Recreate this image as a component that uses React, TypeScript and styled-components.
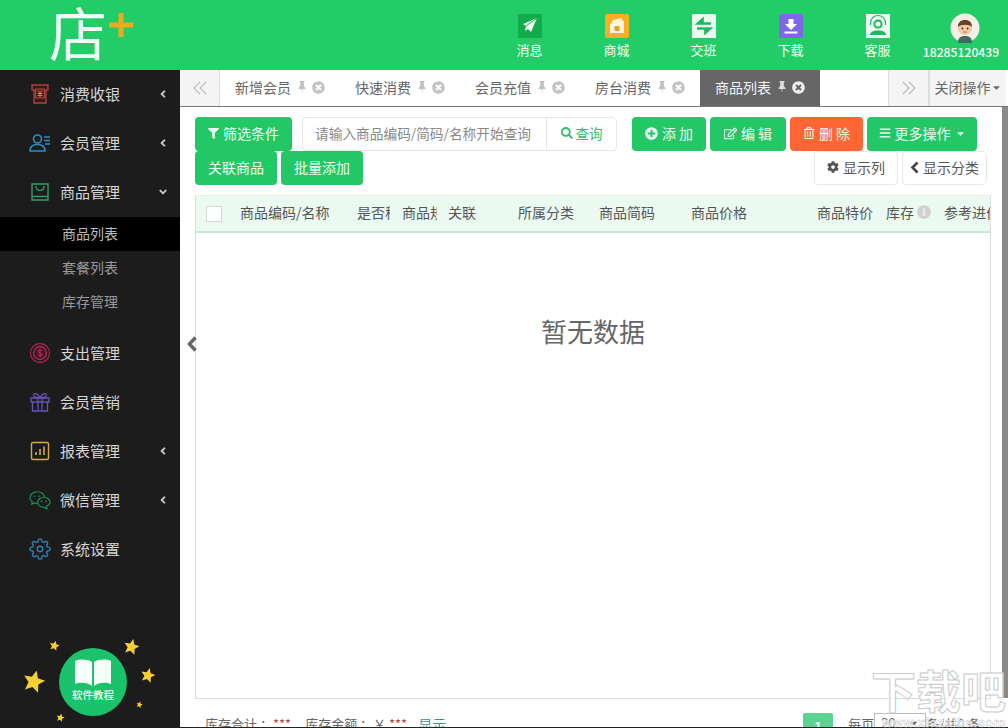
import React from "react";
import styled, { createGlobalStyle } from "styled-components";
import {
  FaFilter,
  FaSearch,
  FaPlusCircle,
  FaRegEdit,
  FaRegTrashAlt,
  FaBars,
  FaCog,
  FaTimesCircle,
  FaInfoCircle,
  FaAngleLeft,
  FaAngleDown,
  FaCaretDown,
} from "react-icons/fa";
import { FiSettings } from "react-icons/fi";

const GlobalStyle = createGlobalStyle`
  html, body {
    margin: 0;
    padding: 0;
    width: 1008px;
    height: 728px;
    overflow: hidden;
    background: #fff;
    font-family: "Noto Sans CJK SC", "Liberation Sans", sans-serif;
  }
`;

const Page = styled.div`
  position: relative;
  width: 1008px;
  height: 728px;
  display: flex;
  flex-direction: column;
  overflow: hidden;
`;

const Header = styled.header`
  flex: 0 0 70px;
  background: #22cc66;
  display: flex;
  align-items: stretch;
  padding-right: 7px;
`;

const Logo = styled.div`
  width: 180px;
  position: relative;
  flex: none;
`;

const LogoText = styled.span`
  position: absolute;
  left: 49px;
  top: -8px;
  font-size: 58px;
  line-height: 78px;
  font-weight: 400;
  color: #effff5;
`;

const LogoPlus = styled.svg`
  position: absolute;
  left: 108px;
  top: 12px;
`;

const HeaderNav = styled.nav`
  margin-left: auto;
  display: flex;
`;

const NavItem = styled.div<{ $wide?: boolean }>`
  width: ${(p) => (p.$wide ? 80 : 87)}px;
  display: flex;
  flex-direction: column;
  align-items: center;
  padding-top: 14px;
  box-sizing: border-box;
`;

const NavLabel = styled.span<{ $number?: boolean }>`
  margin-top: ${(p) => (p.$number ? 0 : 3)}px;
  font-size: ${(p) => (p.$number ? 12.2 : 13)}px;
  line-height: 18px;
  color: #f2fff7;
  white-space: nowrap;
  font-weight: ${(p) => (p.$number ? 500 : 400)};
`;

const AvatarMark = styled.svg`
  margin-left: 7px;
  margin-top: -1px;
  flex: none;
`;

const Body = styled.div`
  flex: 1;
  display: flex;
  min-height: 0;
`;

const Sidebar = styled.aside`
  flex: 0 0 180px;
  background: #1c1c1c;
  display: flex;
  flex-direction: column;
`;

const MenuItem = styled.div`
  height: 49px;
  box-sizing: border-box;
  padding-bottom: 2px;
  display: flex;
  align-items: center;
  padding-left: 29px;
  font-size: 15px;
  color: #d6d6d6;
  flex: none;
`;

const MenuIcon = styled.svg`
  flex: none;
  width: 22px;
  height: 22px;
  margin-right: 9px;
`;

const GearIcon = styled(FiSettings)`
  flex: none;
  width: 22px;
  height: 22px;
  margin-right: 9px;
  color: #2a84b8;
  stroke-width: 1.5;
`;

const MenuCaret = styled.span`
  margin-left: 37px;
  display: flex;
  font-size: 12px;
  color: #c8c8c8;
`;

const SubMenu = styled.div`
  padding-bottom: 10px;
`;

const SubItem = styled.div<{ $active?: boolean }>`
  height: 34px;
  line-height: 32px;
  padding-left: 62px;
  font-size: 14px;
  color: ${(p) => (p.$active ? "#bdbdbd" : "#9a9a9a")};
  background: ${(p) => (p.$active ? "#000" : "transparent")};
`;

const Tutorial = styled.div`
  position: relative;
  margin-top: auto;
  margin-bottom: 12px;
  margin-left: 59px;
  width: 68px;
  height: 68px;
  border-radius: 50%;
  background: #19c26b;
  display: flex;
  flex-direction: column;
  align-items: center;
  padding-top: 11px;
  box-sizing: border-box;
`;

const TutorialLabel = styled.span`
  font-size: 10.5px;
  line-height: 14px;
  color: #f3fff8;
  margin-top: 1px;
  white-space: nowrap;
  font-weight: 500;
`;

const StarMark = styled.svg<{ $x: number; $y: number; $s: number }>`
  position: absolute;
  left: ${(p) => p.$x}px;
  top: ${(p) => p.$y}px;
  width: ${(p) => p.$s}px;
  height: ${(p) => p.$s}px;
`;

const Main = styled.main`
  flex: 1;
  min-width: 0;
  position: relative;
  display: flex;
  flex-direction: column;
  overflow: hidden;
  border-bottom: 1px solid #222;
`;

const TabBar = styled.div`
  flex: 0 0 37px;
  display: flex;
  box-sizing: border-box;
  border-bottom: 1px solid #777;
  background: #fff;
`;

const TabArrow = styled.div<{ $side: "left" | "right" }>`
  width: 40px;
  flex: none;
  display: flex;
  align-items: center;
  justify-content: center;
  background: #f4f4f4;
  box-sizing: border-box;
  border-${(p) => (p.$side === "left" ? "right" : "left")}: 1px solid #dedede;
`;

const Tab = styled.div<{ $active?: boolean }>`
  width: 120px;
  flex: none;
  display: flex;
  align-items: center;
  padding-left: 15px;
  padding-bottom: 2px;
  box-sizing: border-box;
  font-size: 14px;
  background: ${(p) => (p.$active ? "#666" : "#fff")};
  color: ${(p) => (p.$active ? "#f2f2f2" : "#666")};
`;

const TabPin = styled.svg<{ $active?: boolean }>`
  flex: none;
  margin-left: 7px;
  color: ${(p) => (p.$active ? "#ddd" : "#c0c0c0")};
`;

const TabClose = styled.span<{ $active?: boolean }>`
  display: flex;
  margin-left: 6px;
  font-size: 13px;
  color: ${(p) => (p.$active ? "#eee" : "#c4c4c4")};
`;

const TabSpacer = styled.div`
  flex: 1;
`;

const CloseOps = styled.div`
  width: 78px;
  margin-right: 2px;
  flex: none;
  display: flex;
  align-items: center;
  justify-content: center;
  padding-bottom: 2px;
  background: #f4f4f4;
  border-left: 2px solid #dedede;
  box-sizing: border-box;
  font-size: 14px;
  color: #666;
  white-space: nowrap;
`;

const Content = styled.div`
  flex: 1;
  min-height: 0;
  display: flex;
  flex-direction: column;
  padding: 10px 0 0 15px;
`;

const ToolRow = styled.div`
  display: flex;
  height: 34px;
  flex: none;
`;

const Button = styled.div<{ $tone?: "green" | "orange"; $w: number; $ml?: number }>`
  width: ${(p) => p.$w}px;
  margin-left: ${(p) => p.$ml ?? 0}px;
  height: 34px;
  flex: none;
  display: flex;
  align-items: center;
  justify-content: center;
  gap: 4px;
  padding-bottom: 2px;
  box-sizing: border-box;
  border-radius: 4px;
  background: ${(p) => (p.$tone === "orange" ? "#ff6633" : "#24c766")};
  color: #eafff2;
  font-size: 14px;
  white-space: nowrap;
`;

const GhostButton = styled.div<{ $w: number; $ml?: number }>`
  width: ${(p) => p.$w}px;
  margin-left: ${(p) => p.$ml ?? 0}px;
  height: 34px;
  flex: none;
  display: flex;
  align-items: center;
  justify-content: center;
  gap: 4px;
  padding-bottom: 2px;
  box-sizing: border-box;
  border: 1px solid #e8e8e8;
  border-radius: 4px;
  background: #fff;
  color: #555;
  font-size: 14px;
  white-space: nowrap;
`;

const SearchBox = styled.div`
  width: 315px;
  margin-left: 10px;
  height: 34px;
  display: flex;
  flex: none;
  box-sizing: border-box;
  border: 1px solid #e6e6e6;
  border-radius: 4px;
`;

const SearchInput = styled.div`
  width: 244px;
  flex: none;
  padding-left: 12px;
  box-sizing: border-box;
  border-right: 1px solid #e6e6e6;
  font-size: 13.7px;
  line-height: 30px;
  color: #888;
  white-space: nowrap;
  overflow: hidden;
`;

const SearchAction = styled.div`
  flex: 1;
  display: flex;
  align-items: center;
  justify-content: center;
  gap: 3px;
  padding-bottom: 2px;
  font-size: 13.5px;
  color: #35ba70;
`;

const Table = styled.div`
  flex: 0 0 504px;
  width: 796px;
  margin-top: 10px;
  box-sizing: border-box;
  border: 1px solid #dcdcdc;
  border-top-color: #e4efe8;
  display: flex;
  flex-direction: column;
`;

const TableHead = styled.div`
  flex: 0 0 37px;
  box-sizing: border-box;
  padding-bottom: 4px;
  display: grid;
  grid-template-columns: 44px 117px 45px 46px 70px 81px 92px 126px 69px 58px 46px;
  align-items: center;
  background: #eafaf1;
  border-bottom: 2px solid #c4e8d3;
`;

const CheckCell = styled.div`
  padding-left: 10px;
  padding-top: 4px;
  display: flex;
`;

const CheckBox = styled.span`
  width: 16px;
  height: 16px;
  box-sizing: border-box;
  border: 1px solid #d8d8d8;
  background: #fff;
  display: block;
`;

const HeadCell = styled.div<{ $clip?: number }>`
  display: flex;
  align-items: center;
  gap: 3px;
  font-size: 14px;
  line-height: 20px;
  color: #555;
  white-space: nowrap;
  overflow: hidden;
  width: ${(p) => (p.$clip ? `${p.$clip}px` : "auto")};
`;

const InfoMark = styled.span`
  display: flex;
  flex: none;
  font-size: 14px;
  color: #d0d0d0;
`;

const Empty = styled.div`
  flex: 1;
  padding-top: 79px;
  text-align: center;
  font-size: 26px;
  line-height: 38px;
  color: #666;
`;

const Footer = styled.div`
  flex: none;
  display: flex;
  align-items: flex-start;
  margin-top: 16px;
  padding-left: 10px;
  font-size: 13px;
  line-height: 18px;
  color: #666;
  white-space: nowrap;
`;

const Stat = styled.span`
  margin-right: 14px;
`;

const Masked = styled.span`
  color: #b04a4a;
`;

const ShowLink = styled.span`
  margin-left: -3px;
  color: #3a8f9a;
  font-size: 14px;
`;

const Pager = styled.div`
  margin-left: 357px;
  display: flex;
  align-items: flex-start;
`;

const PageButton = styled.span`
  width: 30px;
  height: 30px;
  margin-top: -2px;
  margin-right: 15px;
  border-radius: 2px;
  background: #5dd393;
  color: #fff;
  text-align: center;
  line-height: 28px;
  font-weight: 700;
`;

const PageSelect = styled.span`
  width: 52px;
  height: 20px;
  margin-top: -2px;
  box-sizing: border-box;
  border: 1px solid #bbb;
  padding: 0 6px;
  display: inline-flex;
  justify-content: space-between;
  align-items: center;
`;

const CollapseHandle = styled.svg`
  position: absolute;
  left: 6px;
  top: 265px;
  color: #666;
`;

const ChevronMark = styled.svg`
  flex: none;
`;

const ScrollThumb = styled.div`
  position: absolute;
  right: 0;
  top: 37px;
  width: 6px;
  height: 591px;
  background: #8a8a8a;
`;

const Watermark = styled.div`
  position: absolute;
  right: 2px;
  bottom: 0;
  width: 136px;
  display: flex;
  flex-direction: column;
  align-items: flex-end;
  pointer-events: none;
`;

const WatermarkTitle = styled.span`
  font-size: 45px;
  line-height: 46px;
  font-weight: 700;
  margin-bottom: 5px;
  color: rgba(255, 255, 255, 0.75);
  -webkit-text-stroke: 1px #c9c9c9;
  white-space: nowrap;
`;

const WatermarkUrl = styled.span`
  font-family: "Liberation Sans", sans-serif;
  font-size: 13px;
  line-height: 10px;
  height: 10px;
  letter-spacing: 0.6px;
  font-weight: 700;
  color: rgba(255, 255, 255, 0.8);
  -webkit-text-stroke: 0.5px #c9c9c9;
  white-space: nowrap;
`;

const NavIcon: React.FC<{ name: string }> = ({ name }) => {
  if (name === "msg") {
    return (
      <svg width="24" height="24" viewBox="0 0 24 24">
        <rect width="24" height="24" fill="#12ac4c" />
        <path d="M19 4 L5 10 L8 12 L7 17 L10 15 L13 18 Z" fill="#f2fff6" />
        <path d="M19 4 L8 12" stroke="#12ac4c" strokeWidth="1" />
      </svg>
    );
  }
  if (name === "shop") {
    return (
      <svg width="24" height="24" viewBox="0 0 24 24">
        <rect width="24" height="24" rx="2" fill="#f8ae1f" />
        <path d="M5 10 L19 7 V19 H5 Z" fill="#fff6df" />
        <path d="M8 6 L16 4 L18 7 L6 10 Z" fill="#fff6df" />
        <rect x="9.5" y="12" width="5" height="5" fill="#e2a02a" />
      </svg>
    );
  }
  if (name === "swap") {
    return (
      <svg width="24" height="24" viewBox="0 0 24 24">
        <rect width="24" height="24" fill="#ecfbf2" />
        <path d="M19 9.5 H6 L10.5 5.5 V8.5" stroke="#22b562" strokeWidth="2.6" fill="none" />
        <path d="M5 14.5 H18 L13.5 18.5 V15.5" stroke="#22b562" strokeWidth="2.6" fill="none" />
      </svg>
    );
  }
  if (name === "down") {
    return (
      <svg width="24" height="24" viewBox="0 0 24 24">
        <rect width="24" height="24" rx="2" fill="#7f68e8" />
        <path d="M9.5 5 H14.5 V10 H18 L12 16 L6 10 H9.5 Z" fill="#fff" />
        <rect x="5.5" y="17.5" width="13" height="2" fill="#fff" />
      </svg>
    );
  }
  return (
    <svg width="24" height="24" viewBox="0 0 24 24">
      <rect width="24" height="24" fill="#ecfbf2" />
      <circle cx="12" cy="10" r="4.6" fill="#22b562" />
      <circle cx="12" cy="10" r="2.6" fill="#ecfbf2" />
      <path d="M4.5 11 V9 A7.5 7.5 0 0 1 19.5 9 V11" fill="none" stroke="#22b562" strokeWidth="1.2" />
      <path d="M3.5 21 C5 17 9 16.5 12 16.5 C15 16.5 19 17 20.5 21 Z" fill="#22b562" />
    </svg>
  );
};

const Avatar: React.FC = () => (
  <AvatarMark width="30" height="30" viewBox="0 0 30 30">
    <circle cx="15" cy="15" r="14.5" fill="#f6efe6" />
    <path d="M8 30 C8 24 11 23 15 23 C19 23 22 24 22 30 Z" fill="#3f6b5c" />
    <circle cx="15" cy="15" r="7" fill="#f3c9a6" />
    <path d="M8 14 C8 8 12 7 15 7 C18 7 22 8 22 14 C19 11 11 11 8 14 Z" fill="#6b3f26" />
    <circle cx="12.4" cy="15.5" r="0.9" fill="#40281a" />
    <circle cx="17.6" cy="15.5" r="0.9" fill="#40281a" />
    <path d="M13 19 H17" stroke="#b0664a" strokeWidth="0.9" />
  </AvatarMark>
);

const SideIcon: React.FC<{ name: string }> = ({ name }) => {
  const common = { viewBox: "0 0 22 22", fill: "none" as const };
  switch (name) {
    case "cash":
      return (
        <MenuIcon {...common}>
          <path d="M3 2 H19 V7 H17 V20 H5 V7 H3 Z" fill="#3a1a18" stroke="#a9443c" strokeWidth="1.4" />
          <rect x="6.5" y="6" width="9" height="9" fill="#5a201c" stroke="#a9443c" />
          <path d="M9 7.5 L11 10 L13 7.5 M8.8 10.5 H13.2 M8.8 12.5 H13.2 M11 10 V14" stroke="#d8a04a" strokeWidth="0.8" />
        </MenuIcon>
      );
    case "member":
      return (
        <MenuIcon {...common}>
          <circle cx="8.5" cy="7" r="4" stroke="#2a8fc4" strokeWidth="1.6" />
          <path d="M1 19 C1 14 5 12.5 8.5 12.5 C12 12.5 16 14 16 19 Z" stroke="#2a8fc4" strokeWidth="1.6" />
          <path d="M15 5 H21 M15 8.5 H21 M16 12 H21" stroke="#2a8fc4" strokeWidth="1.3" />
        </MenuIcon>
      );
    case "goods":
      return (
        <MenuIcon {...common}>
          <path d="M3 3 H19 V19 H3 Z M3 15.5 H19" stroke="#2e9e68" strokeWidth="1.4" />
          <path d="M7 5 C7 11 15 11 15 5" stroke="#2e9e68" strokeWidth="1.4" />
        </MenuIcon>
      );
    case "expense":
      return (
        <MenuIcon {...common}>
          <circle cx="11" cy="11" r="9.5" stroke="#a8234a" strokeWidth="1.3" />
          <circle cx="11" cy="11" r="6.5" fill="#4c1428" stroke="#b02a52" strokeWidth="1.3" />
          <path d="M13 9 C12 7.6 9 8 9 9.6 C9 11.6 13 10.6 13 12.6 C13 14 10 14.4 9 13 M11 7 V15" stroke="#c63a64" strokeWidth="0.8" />
        </MenuIcon>
      );
    case "gift":
      return (
        <MenuIcon {...common}>
          <path d="M2 7 H20 V11 H2 Z M3.5 11 H18.5 V20 H3.5 Z M9 7 V20 M13 7 V20" stroke="#6a55b8" strokeWidth="1.3" />
          <path d="M11 6.5 C8 1 3.5 2 5 5 C5.6 6.2 8 6.5 11 6.5 C14 6.5 16.4 6.2 17 5 C18.5 2 14 1 11 6.5 Z" stroke="#6a55b8" strokeWidth="1.2" />
        </MenuIcon>
      );
    case "report":
      return (
        <MenuIcon {...common}>
          <rect x="2.5" y="2.5" width="17" height="17" rx="1.5" stroke="#d8a84c" strokeWidth="1.4" />
          <path d="M7 15 V12 M11 15 V9 M15 15 V6.5" stroke="#d8a84c" strokeWidth="1.6" />
        </MenuIcon>
      );
    case "wechat":
      return (
        <MenuIcon {...common} viewBox="0 0 24 22">
          <path d="M9 2 C4.5 2 1 5 1 8.5 C1 10.5 2 12 3.5 13 L3 15.5 L6 14.2 C7 14.6 8 14.7 9.2 14.7" stroke="#23905a" strokeWidth="1.3" />
          <path d="M9 2 C13 2 16.5 4.5 17 8" stroke="#23905a" strokeWidth="1.3" />
          <path d="M16 8 C12.5 8 9.5 10.4 9.5 13.5 C9.5 16.6 12.5 19 16 19 L19.5 20.5 L19.2 17.8 C21.5 16.6 23 15.4 23 13.5 C23 10.4 19.5 8 16 8 Z" stroke="#23905a" strokeWidth="1.3" />
          <circle cx="6" cy="7" r="0.9" fill="#23905a" />
          <circle cx="11" cy="7" r="0.9" fill="#23905a" />
          <circle cx="13.5" cy="12.5" r="0.9" fill="#23905a" />
          <circle cx="18.5" cy="12.5" r="0.9" fill="#23905a" />
        </MenuIcon>
      );
    default:
      return <GearIcon />;
  }
};

const Star: React.FC<{ x: number; y: number; s: number }> = ({ x, y, s }) => (
  <StarMark $x={x} $y={y} $s={s} viewBox="0 0 20 20">
    <path
      d="M10 1 L12.6 7 L19 7.6 L14.2 12 L15.6 18.6 L10 15.2 L4.4 18.6 L5.8 12 L1 7.6 L7.4 7 Z"
      fill="#f6cf35"
      transform="rotate(14 10 10)"
    />
  </StarMark>
);

const DoubleArrow: React.FC<{ dir: "left" | "right" }> = ({ dir }) => (
  <svg width="16" height="16" viewBox="0 0 16 16">
    <path
      d={dir === "left" ? "M8 2 L2 8 L8 14 M14 2 L8 8 L14 14" : "M2 2 L8 8 L2 14 M8 2 L14 8 L8 14"}
      fill="none"
      stroke="#bcbcbc"
      strokeWidth="1.3"
    />
  </svg>
);

const Pin: React.FC<{ active?: boolean }> = ({ active }) => (
  <TabPin $active={active} width="8" height="12" viewBox="0 0 8 12">
    <path d="M1.5 0 H6.5 V1 L5.8 1.6 V5 L7.5 7 V8 H4.5 L4 12 L3.5 8 H0.5 V7 L2.2 5 V1.6 L1.5 1 Z" fill="currentColor" />
  </TabPin>
);

const menuTop = [
  { icon: "cash", label: "消费收银", caret: "left" },
  { icon: "member", label: "会员管理", caret: "left" },
  { icon: "goods", label: "商品管理", caret: "down" },
];

const menuBottom = [
  { icon: "expense", label: "支出管理" },
  { icon: "gift", label: "会员营销" },
  { icon: "report", label: "报表管理", caret: "left" },
  { icon: "wechat", label: "微信管理", caret: "left" },
  { icon: "gear", label: "系统设置" },
];

const navItems = [
  { icon: "msg", label: "消息" },
  { icon: "shop", label: "商城" },
  { icon: "swap", label: "交班" },
  { icon: "down", label: "下载" },
  { icon: "service", label: "客服" },
];

const tabs = ["新增会员", "快速消费", "会员充值", "房台消费", "商品列表"];

const columns = ["商品编码/名称", "是否称重", "商品规格", "关联", "所属分类", "商品简码", "商品价格", "商品特价"];

const renderMenu = (item: { icon: string; label: string; caret?: string }) => (
  <MenuItem key={item.label}>
    <SideIcon name={item.icon} />
    {item.label}
    {item.caret && <MenuCaret>{item.caret === "down" ? <FaAngleDown /> : <FaAngleLeft />}</MenuCaret>}
  </MenuItem>
);

const App: React.FC = () => {
  return (
    <Page>
      <GlobalStyle />
      <Header>
        <Logo>
          <LogoText>店</LogoText>
          <LogoPlus width="26" height="26" viewBox="0 0 26 26">
            <path d="M13 1 V25 M1 13 H25" stroke="#f0a81c" strokeWidth="5" />
          </LogoPlus>
        </Logo>
        <HeaderNav>
          {navItems.map((n) => (
            <NavItem key={n.label}>
              <NavIcon name={n.icon} />
              <NavLabel>{n.label}</NavLabel>
            </NavItem>
          ))}
          <NavItem $wide>
            <Avatar />
            <NavLabel $number>18285120439</NavLabel>
          </NavItem>
        </HeaderNav>
      </Header>
      <Body>
        <Sidebar>
          {menuTop.map(renderMenu)}
          <SubMenu>
            <SubItem $active>商品列表</SubItem>
            <SubItem>套餐列表</SubItem>
            <SubItem>库存管理</SubItem>
          </SubMenu>
          {menuBottom.map(renderMenu)}
          <Tutorial>
            <svg width="38" height="28" viewBox="0 0 38 28">
              <path d="M18 3 C13 0 6 0 1 2 V25 C6 23 13 23 18 27 Z" fill="#f4fff9" />
              <path d="M20 3 C25 0 32 0 37 2 V25 C32 23 25 23 20 27 Z" fill="#f4fff9" />
            </svg>
            <TutorialLabel>软件教程</TutorialLabel>
            <Star x={-37} y={21} s={24} />
            <Star x={-10} y={-8} s={11} />
            <Star x={64} y={-10} s={17} />
            <Star x={81} y={19} s={16} />
            <Star x={77} y={53} s={7} />
            <Star x={-3} y={65} s={9} />
          </Tutorial>
        </Sidebar>
        <Main>
          <TabBar>
            <TabArrow $side="left">
              <DoubleArrow dir="left" />
            </TabArrow>
            {tabs.map((t, i) => (
              <Tab key={t} $active={i === 4}>
                {t}
                <Pin active={i === 4} />
                <TabClose $active={i === 4}>
                  <FaTimesCircle />
                </TabClose>
              </Tab>
            ))}
            <TabSpacer />
            <TabArrow $side="right">
              <DoubleArrow dir="right" />
            </TabArrow>
            <CloseOps>
              关闭操作
              <FaCaretDown size={11} />
            </CloseOps>
          </TabBar>
          <Content>
            <ToolRow>
              <Button $w={97}>
                <FaFilter size={11} />
                筛选条件
              </Button>
              <SearchBox>
                <SearchInput>请输入商品编码/简码/名称开始查询</SearchInput>
                <SearchAction>
                  <FaSearch size={12} />
                  查询
                </SearchAction>
              </SearchBox>
              <Button $w={74} $ml={15}>
                <FaPlusCircle size={13} />添 加
              </Button>
              <Button $w={76} $ml={4}>
                <FaRegEdit size={13} />编 辑
              </Button>
              <Button $w={73} $ml={4} $tone="orange">
                <FaRegTrashAlt size={12} />删 除
              </Button>
              <Button $w={110} $ml={4}>
                <FaBars size={12} />更多操作
                <FaCaretDown size={11} />
              </Button>
            </ToolRow>
            <ToolRow>
              <Button $w={82}>关联商品</Button>
              <Button $w={82} $ml={4}>
                批量添加
              </Button>
              <GhostButton $w={84} $ml={451}>
                <FaCog size={12} />显示列
              </GhostButton>
              <GhostButton $w={85} $ml={4}>
                <ChevronMark width="9" height="13" viewBox="0 0 9 13">
                  <path d="M7.5 1.5 L2.5 6.5 L7.5 11.5" fill="none" stroke="#444" strokeWidth="2.6" />
                </ChevronMark>
                显示分类
              </GhostButton>
            </ToolRow>
            <Table>
              <TableHead>
                <CheckCell>
                  <CheckBox />
                </CheckCell>
                <HeadCell>{columns[0]}</HeadCell>
                <HeadCell $clip={33}>{columns[1]}</HeadCell>
                <HeadCell $clip={35}>{columns[2]}</HeadCell>
                <HeadCell>{columns[3]}</HeadCell>
                <HeadCell>{columns[4]}</HeadCell>
                <HeadCell>{columns[5]}</HeadCell>
                <HeadCell>{columns[6]}</HeadCell>
                <HeadCell>{columns[7]}</HeadCell>
                <HeadCell>
                  库存
                  <InfoMark>
                    <FaInfoCircle />
                  </InfoMark>
                </HeadCell>
                <HeadCell>参考进价</HeadCell>
              </TableHead>
              <Empty>暂无数据</Empty>
            </Table>
            <Footer>
              <Stat>
                库存合计 ：<Masked>***</Masked>
              </Stat>
              <Stat>
                库存金额 ：￥ <Masked>***</Masked>
              </Stat>
              <ShowLink>显示</ShowLink>
              <Pager>
                <PageButton>1</PageButton>
                每页
                <PageSelect>
                  20
                  <FaCaretDown size={10} />
                </PageSelect>
                条/共0 条
              </Pager>
            </Footer>
          </Content>
          <CollapseHandle width="12" height="18" viewBox="0 0 12 18">
            <path d="M9.5 2.5 L3.5 9 L9.5 15.5" fill="none" stroke="currentColor" strokeWidth="3.4" />
          </CollapseHandle>
          <ScrollThumb />
        </Main>
      </Body>
      <Watermark>
        <WatermarkTitle>下载吧</WatermarkTitle>
        <WatermarkUrl>www.xiazaiba.com</WatermarkUrl>
      </Watermark>
    </Page>
  );
};

export default App;
